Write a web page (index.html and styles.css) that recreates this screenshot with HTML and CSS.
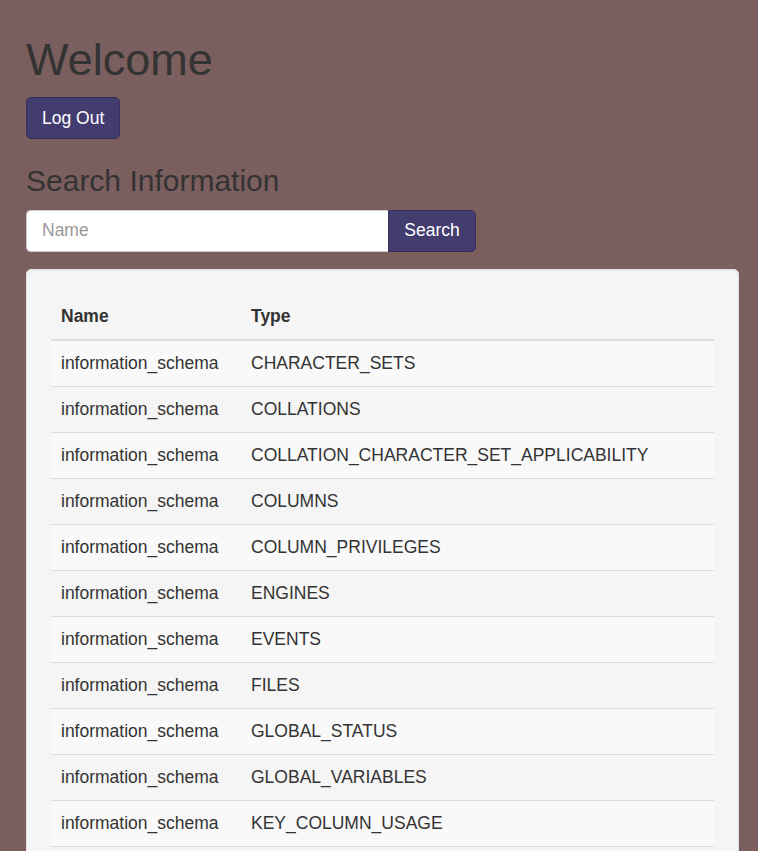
FILE: index.html
```html
<!DOCTYPE html>
<html lang="en">
<head>
<meta charset="utf-8">
<title>Welcome</title>
<link rel="stylesheet" href="styles.css">
</head>
<body>
<div class="page">
  <h1 class="title">Welcome</h1>
  <button class="btn" type="button">Log Out</button>
  <h3 class="subtitle">Search Information</h3>
  <form class="search">
    <input class="search-input" type="text" placeholder="Name">
    <button class="btn btn-attached" type="button">Search</button>
  </form>
  <div class="well">
    <table class="table">
      <thead>
        <tr><th class="col-name">Name</th><th>Type</th></tr>
      </thead>
      <tbody>
        <tr><td>information_schema</td><td>CHARACTER_SETS</td></tr>
        <tr><td>information_schema</td><td>COLLATIONS</td></tr>
        <tr><td>information_schema</td><td>COLLATION_CHARACTER_SET_APPLICABILITY</td></tr>
        <tr><td>information_schema</td><td>COLUMNS</td></tr>
        <tr><td>information_schema</td><td>COLUMN_PRIVILEGES</td></tr>
        <tr><td>information_schema</td><td>ENGINES</td></tr>
        <tr><td>information_schema</td><td>EVENTS</td></tr>
        <tr><td>information_schema</td><td>FILES</td></tr>
        <tr><td>information_schema</td><td>GLOBAL_STATUS</td></tr>
        <tr><td>information_schema</td><td>GLOBAL_VARIABLES</td></tr>
        <tr><td>information_schema</td><td>KEY_COLUMN_USAGE</td></tr>
        <tr><td>information_schema</td><td>OPTIMIZER_TRACE</td></tr>
        <tr><td>information_schema</td><td>PARAMETERS</td></tr>
        <tr><td>information_schema</td><td>PARTITIONS</td></tr>
      </tbody>
    </table>
  </div>
</div>
</body>
</html>
```
FILE: styles.css
```css
html, body {
  margin: 0;
  padding: 0;
  background: #7b5e5e;
}
body {
  font-family: "Liberation Sans", Arial, Helvetica, sans-serif;
  font-size: 17.5px;
  line-height: 25px;
  color: #333;
}
.page {
  padding: 10px 19px 0 26px;
}
.title {
  margin: 25px 0 12.5px;
  font-size: 45px;
  line-height: 49.5px;
  font-weight: 500;
  color: #333;
}
.subtitle {
  margin: 25px 0 12.5px;
  font-size: 30px;
  line-height: 33px;
  font-weight: 500;
  color: #333;
}
.btn {
  display: block;
  box-sizing: border-box;
  height: 42px;
  padding: 7.5px 15px;
  font-family: inherit;
  font-size: 17.5px;
  line-height: 25px;
  color: #fff;
  background: #433c6e;
  border: 1px solid #363059;
  border-radius: 5px;
  cursor: pointer;
}
.search {
  display: flex;
  width: 450px;
  margin: 0 0 17px;
}
.search-input {
  box-sizing: border-box;
  width: 362px;
  height: 42px;
  padding: 7.5px 15px;
  font-family: inherit;
  font-size: 17.5px;
  line-height: 25px;
  color: #555;
  background: #fff;
  border: 1px solid #ccc;
  border-right: 0;
  border-radius: 5px 0 0 5px;
  outline: none;
}
.search-input::placeholder {
  color: #999;
}
.btn-attached {
  width: 88px;
  border-radius: 0 5px 5px 0;
}
.well {
  background: #f5f5f5;
  border: 1px solid #e3e3e3;
  border-radius: 5px;
  padding: 24px;
  box-shadow: inset 0 1px 1px rgba(0,0,0,0.05);
}
.table {
  width: 100%;
  border-collapse: collapse;
  border-spacing: 0;
}
.table th,
.table td {
  padding: 10px;
  line-height: 25px;
  text-align: left;
  vertical-align: top;
}
.table th {
  font-weight: bold;
  border-bottom: 2px solid #ddd;
}
.table td {
  border-top: 1px solid #ddd;
}
.col-name {
  width: 170px;
}
.table tbody tr:nth-child(odd) {
  background: #f9f9f9;
}
```
